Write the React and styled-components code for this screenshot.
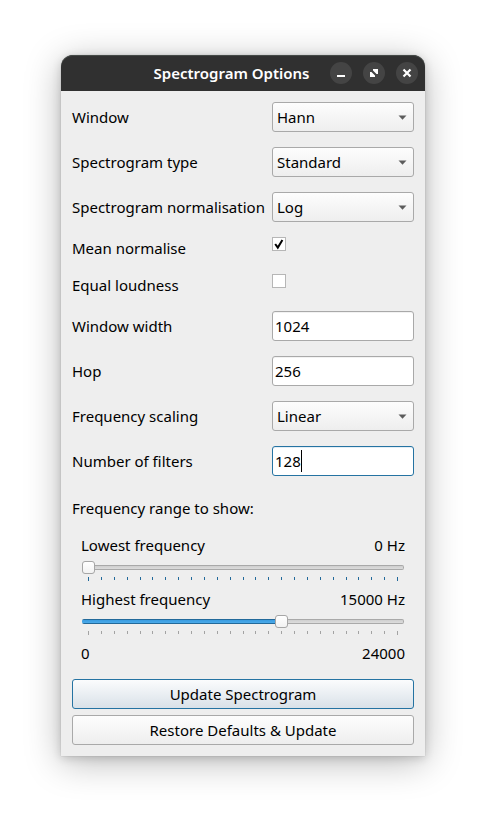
import React, { useState } from "react";
import styled, { createGlobalStyle, css } from "styled-components";

const GlobalStyle = createGlobalStyle`
  *, *::before, *::after { box-sizing: border-box; }
  body {
    margin: 0;
    background: #ffffff;
    color: #000000;
    font-family: "Noto Sans", "Open Sans", sans-serif;
    font-size: 15px;
    line-height: 22px;
  }
`;

const Desktop = styled.main`
  min-height: 100vh;
  padding: 55px 61px 67px;
`;

const Dialog = styled.section`
  border-radius: 12px 12px 0 0;
  background: #eeeeee;
  box-shadow: 0 0 1px rgba(0, 0, 0, 0.35), 0 2px 10px rgba(0, 0, 0, 0.16),
    0 6px 36px rgba(0, 0, 0, 0.28);
`;

const TitleBar = styled.header`
  display: flex;
  align-items: center;
  height: 36px;
  padding: 0 7px 0 72px;
  border-radius: 12px 12px 0 0;
  background: #303030;
  box-shadow: inset 0 1px 0 #454a47;
`;

const Title = styled.h1`
  flex: 1;
  margin: 0;
  color: #ffffff;
  font-size: 15px;
  font-weight: 600;
  line-height: 22px;
  text-align: center;
  white-space: nowrap;
`;

const WindowButtons = styled.div`
  display: flex;
  gap: 11px;
`;

const WindowButton = styled.button`
  display: grid;
  place-items: center;
  width: 22px;
  height: 22px;
  padding: 0;
  border: 0;
  border-radius: 50%;
  background: #444444;
  color: #ffffff;

  svg {
    display: block;
  }
`;

const Body = styled.form`
  padding: 11px;
`;

const Fields = styled.div`
  display: grid;
  gap: 15px;
`;

const Row = styled.div`
  display: grid;
  grid-template-columns: 200px 1fr;
  align-items: center;
`;

const Label = styled.label`
  white-space: nowrap;
`;

const frame = css`
  width: 100%;
  height: 30px;
  border: 1px solid ${(p) => (p.$active ? "#2573a2" : "#a9a9a9")};
  border-radius: 3px;
  color: #000000;
  font: inherit;
  outline: none;
`;

const ControlBox = styled.div`
  position: relative;
  display: flex;
`;

const SelectBox = styled.select`
  ${frame}
  appearance: none;
  padding: 0 24px 0 4px;
  background: linear-gradient(#fdfdfd, #eeeeee);
`;

const Arrow = styled.svg`
  position: absolute;
  top: 13px;
  right: 7px;
  pointer-events: none;
`;

const TextBox = styled.input`
  ${frame}
  padding: 0 2px;
  background: #ffffff;
  box-shadow: inset 0 1px 0 ${(p) => (p.$active ? "#e3eef5" : "#f2f2f2")};
`;

const Caret = styled.span`
  position: absolute;
  top: 4px;
  left: 29px;
  width: 1px;
  height: 22px;
  background: #000000;
`;

const TickBox = styled.input`
  appearance: none;
  align-self: start;
  width: 14px;
  height: 14px;
  margin: 0;
  border: 1px solid #b6b6b6;
  background: #ffffff;
`;

const TickHolder = styled.div`
  position: relative;
  display: flex;
  height: 22px;
`;

const TickMark = styled.svg`
  position: absolute;
  top: 0;
  left: 0;
  pointer-events: none;
`;

const RangeGroup = styled.fieldset`
  min-width: 0;
  margin: 21px 0 15px;
  padding: 0;
  border: 0;
`;

const RangeTitle = styled.legend`
  padding: 0;
  margin-bottom: 15px;
`;

const RangeText = styled.div`
  display: flex;
  justify-content: space-between;
  padding: 0 9px;
`;

const SliderArea = styled.div`
  height: 32px;
  padding: 5px 10px 0;
`;

const Slider = styled.input`
  appearance: none;
  display: block;
  width: 100%;
  height: 13px;
  margin: 0;
  background: transparent;

  &::-webkit-slider-runnable-track {
    height: 5px;
    border-radius: 2px;
    background:
      linear-gradient(#22699a 1px, #3a9ce0 1px, #4baaea 4px, #22699a 4px) 0 0 / ${(p) => p.$fill}% 100% no-repeat,
      linear-gradient(#a9a9a9 1px, #cfcfcf 1px, #dcdcdc 4px, #a9a9a9 4px);
    box-shadow: inset -1px 0 0 #a9a9a9;
  }

  &::-webkit-slider-thumb {
    appearance: none;
    width: 13px;
    height: 13px;
    margin-top: -4px;
    border: 1px solid #a6a6a6;
    border-radius: 3px;
    background: linear-gradient(#ffffff, #f2f2f2);
  }
`;

const Ticks = styled.div`
  display: flex;
  justify-content: space-between;
  padding: 3px 6px 0;
  color: ${(p) => (p.$active ? "#22699a" : "#a3a3a3")};
`;

const Tick = styled.span`
  width: 1px;
  height: 3px;
  background: currentColor;

  &:first-child,
  &:last-child {
    height: 4px;
  }
`;

const Actions = styled.div`
  display: grid;
  gap: 6px;
`;

const ActionButton = styled.button`
  ${frame}
  padding: 0 8px;
  background: ${(p) =>
    p.$active
      ? "linear-gradient(#fbfcfd, #d9e1e8)"
      : "linear-gradient(#fdfdfd, #eeeeee)"};
`;

function SelectRow({ id, label, options }) {
  return (
    <Row>
      <Label htmlFor={id}>{label}</Label>
      <ControlBox>
        <SelectBox id={id} defaultValue={options[0]}>
          {options.map((o) => (
            <option key={o}>{o}</option>
          ))}
        </SelectBox>
        <Arrow width="9" height="5" viewBox="0 0 9 5" aria-hidden="true">
          <path d="M0.5 0.5h8L4.5 4.7z" fill="#5c5c5c" />
        </Arrow>
      </ControlBox>
    </Row>
  );
}

function TextRow({ id, label, value, active }) {
  return (
    <Row>
      <Label htmlFor={id}>{label}</Label>
      <ControlBox>
        <TextBox id={id} type="text" defaultValue={value} $active={active} />
        {active && <Caret />}
      </ControlBox>
    </Row>
  );
}

function CheckRow({ id, label, initial }) {
  const [checked, setChecked] = useState(initial);
  return (
    <Row>
      <Label htmlFor={id}>{label}</Label>
      <TickHolder>
        <TickBox
          id={id}
          type="checkbox"
          checked={checked}
          onChange={(e) => setChecked(e.target.checked)}
        />
        {checked && (
          <TickMark width="14" height="14" viewBox="0 0 14 14" aria-hidden="true">
            <path d="M3.2 7L5.8 10.6L10.4 3" fill="none" stroke="#000" strokeWidth="2" />
          </TickMark>
        )}
      </TickHolder>
    </Row>
  );
}

function FrequencySlider({ id, label, initial, active }) {
  const [value, setValue] = useState(initial);
  return (
    <>
      <RangeText>
        <label htmlFor={id}>{label}</label>
        <output htmlFor={id}>{value} Hz</output>
      </RangeText>
      <SliderArea>
        <Slider
          id={id}
          type="range"
          min="0"
          max="24000"
          step="1000"
          value={value}
          $fill={(value / 24000) * 100}
          onChange={(e) => setValue(Number(e.target.value))}
        />
        <Ticks $active={active}>
          {Array.from({ length: 25 }, (_, i) => (
            <Tick key={i} />
          ))}
        </Ticks>
      </SliderArea>
    </>
  );
}

export default function App() {
  return (
    <>
      <GlobalStyle />
      <Desktop>
        <Dialog>
          <TitleBar>
            <Title>Spectrogram Options</Title>
            <WindowButtons>
              <WindowButton type="button" aria-label="Minimise">
                <svg width="22" height="22" viewBox="0 0 22 22">
                  <path d="M7 13h8v2H7z" fill="currentColor" />
                </svg>
              </WindowButton>
              <WindowButton type="button" aria-label="Maximise">
                <svg width="22" height="22" viewBox="0 0 22 22">
                  <path
                    d="M10 7h5v5h-1.5L10 8.5zM7 10h1.5L12 13.5V15H7z"
                    fill="currentColor"
                  />
                </svg>
              </WindowButton>
              <WindowButton type="button" aria-label="Close">
                <svg width="22" height="22" viewBox="0 0 22 22">
                  <path d="M7.5 7.5l7 7M14.5 7.5l-7 7" stroke="currentColor" strokeWidth="2.2" />
                </svg>
              </WindowButton>
            </WindowButtons>
          </TitleBar>
          <Body onSubmit={(e) => e.preventDefault()}>
            <Fields>
              <SelectRow id="window" label="Window" options={["Hann"]} />
              <SelectRow id="type" label="Spectrogram type" options={["Standard"]} />
              <SelectRow id="norm" label="Spectrogram normalisation" options={["Log"]} />
              <CheckRow id="mean" label="Mean normalise" initial={true} />
              <CheckRow id="loudness" label="Equal loudness" initial={false} />
              <TextRow id="width" label="Window width" value="1024" />
              <TextRow id="hop" label="Hop" value="256" />
              <SelectRow id="scaling" label="Frequency scaling" options={["Linear"]} />
              <TextRow id="filters" label="Number of filters" value="128" active />
            </Fields>
            <RangeGroup>
              <RangeTitle>Frequency range to show:</RangeTitle>
              <FrequencySlider id="lowest" label="Lowest frequency" initial={0} active />
              <FrequencySlider id="highest" label="Highest frequency" initial={15000} />
              <RangeText>
                <span>0</span>
                <span>24000</span>
              </RangeText>
            </RangeGroup>
            <Actions>
              <ActionButton type="submit" $active>
                Update Spectrogram
              </ActionButton>
              <ActionButton type="button">Restore Defaults &amp; Update</ActionButton>
            </Actions>
          </Body>
        </Dialog>
      </Desktop>
    </>
  );
}
